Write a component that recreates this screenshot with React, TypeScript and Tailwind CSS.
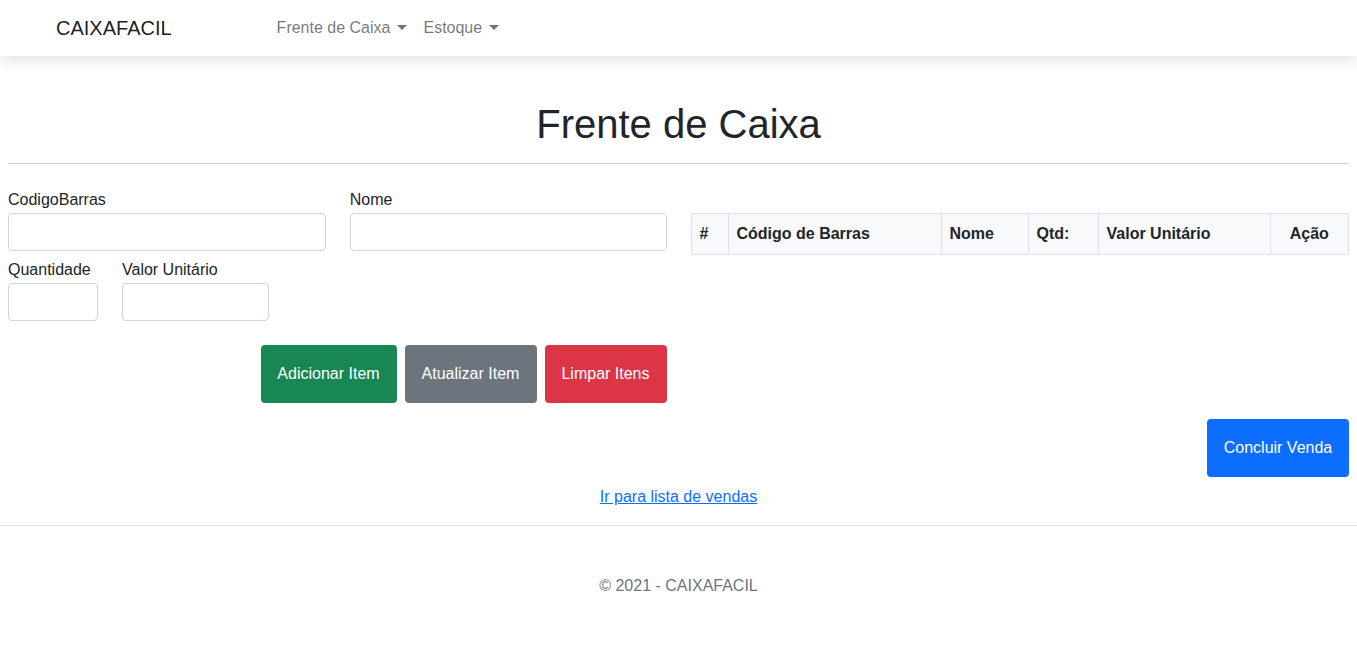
import React from "react";

const Caret = () => (
  <span className="ml-[7px] inline-block h-0 w-0 border-x-[5px] border-t-[5px] border-x-transparent border-t-current align-[3px]" />
);

const Field = ({ label, width }: { label: string; width: string }) => (
  <div className={`flex flex-col ${width}`}>
    <label className="mb-px leading-6">{label}</label>
    <input className="h-[38px] w-full rounded border border-[#ced4da] bg-white px-3" />
  </div>
);

const App = () => {
  return (
    <div className="min-h-[657px] bg-white font-['Liberation_Sans',Arial,sans-serif] text-[16px] text-[#212529]">
      <nav className="flex h-14 items-center bg-white shadow-[0_4px_14px_rgba(0,0,0,0.12)]">
        <span className="ml-14 text-[20px] text-[rgba(0,0,0,0.9)]">CAIXAFACIL</span>
        <div className="ml-[105px] flex gap-4 text-[rgba(0,0,0,0.55)]">
          <span>
            Frente de Caixa
            <Caret />
          </span>
          <span>
            Estoque
            <Caret />
          </span>
        </div>
      </nav>

      <main className="px-2">
        <h1 className="mt-[44px] text-center text-[40px] leading-[48px]">Frente de Caixa</h1>
        <hr className="mt-[15px] border-[#cfcfcf]" />

        <div className="mt-6 grid grid-cols-2 gap-6">
          <div>
            <div className="flex gap-6">
              <Field label="CodigoBarras" width="w-[318px]" />
              <Field label="Nome" width="w-[317px]" />
            </div>
            <div className="mt-[7px] flex gap-6">
              <Field label="Quantidade" width="w-[90px]" />
              <Field label="Valor Unitário" width="w-[147px]" />
            </div>
            <div className="mt-6 flex justify-end gap-2 text-white">
              <button className="h-[58px] w-[136px] rounded bg-[#198754]">Adicionar Item</button>
              <button className="h-[58px] w-[132px] rounded bg-[#6c757d]">Atualizar Item</button>
              <button className="h-[58px] w-[122px] rounded bg-[#dc3545]">Limpar Itens</button>
            </div>
          </div>

          <div className="pt-[25px]">
            <table className="w-full border-collapse">
              <thead>
                <tr className="h-[41px] bg-[#f8f9fa] text-left font-bold">
                  <th className="w-[37px] border border-[#dee2e6] px-2">#</th>
                  <th className="w-[213px] border border-[#dee2e6] px-2">Código de Barras</th>
                  <th className="w-[87px] border border-[#dee2e6] px-2">Nome</th>
                  <th className="w-[70px] border border-[#dee2e6] px-2">Qtd:</th>
                  <th className="w-[172px] border border-[#dee2e6] px-2">Valor Unitário</th>
                  <th className="border border-[#dee2e6] px-2 text-center">Ação</th>
                </tr>
              </thead>
            </table>
          </div>
        </div>

        <div className="mt-4 flex justify-end">
          <button className="h-[58px] w-[142px] rounded bg-[#0d6efd] text-white">Concluir Venda</button>
        </div>

        <div className="mt-2 text-center">
          <a href="#" className="text-[#0d6efd] underline">
            Ir para lista de vendas
          </a>
        </div>
      </main>

      <hr className="mt-4 border-[#dee2e6]" />
      <footer className="mt-[48px] text-center text-[#6c757d]">© 2021 - CAIXAFACIL</footer>
    </div>
  );
};

export default App;
